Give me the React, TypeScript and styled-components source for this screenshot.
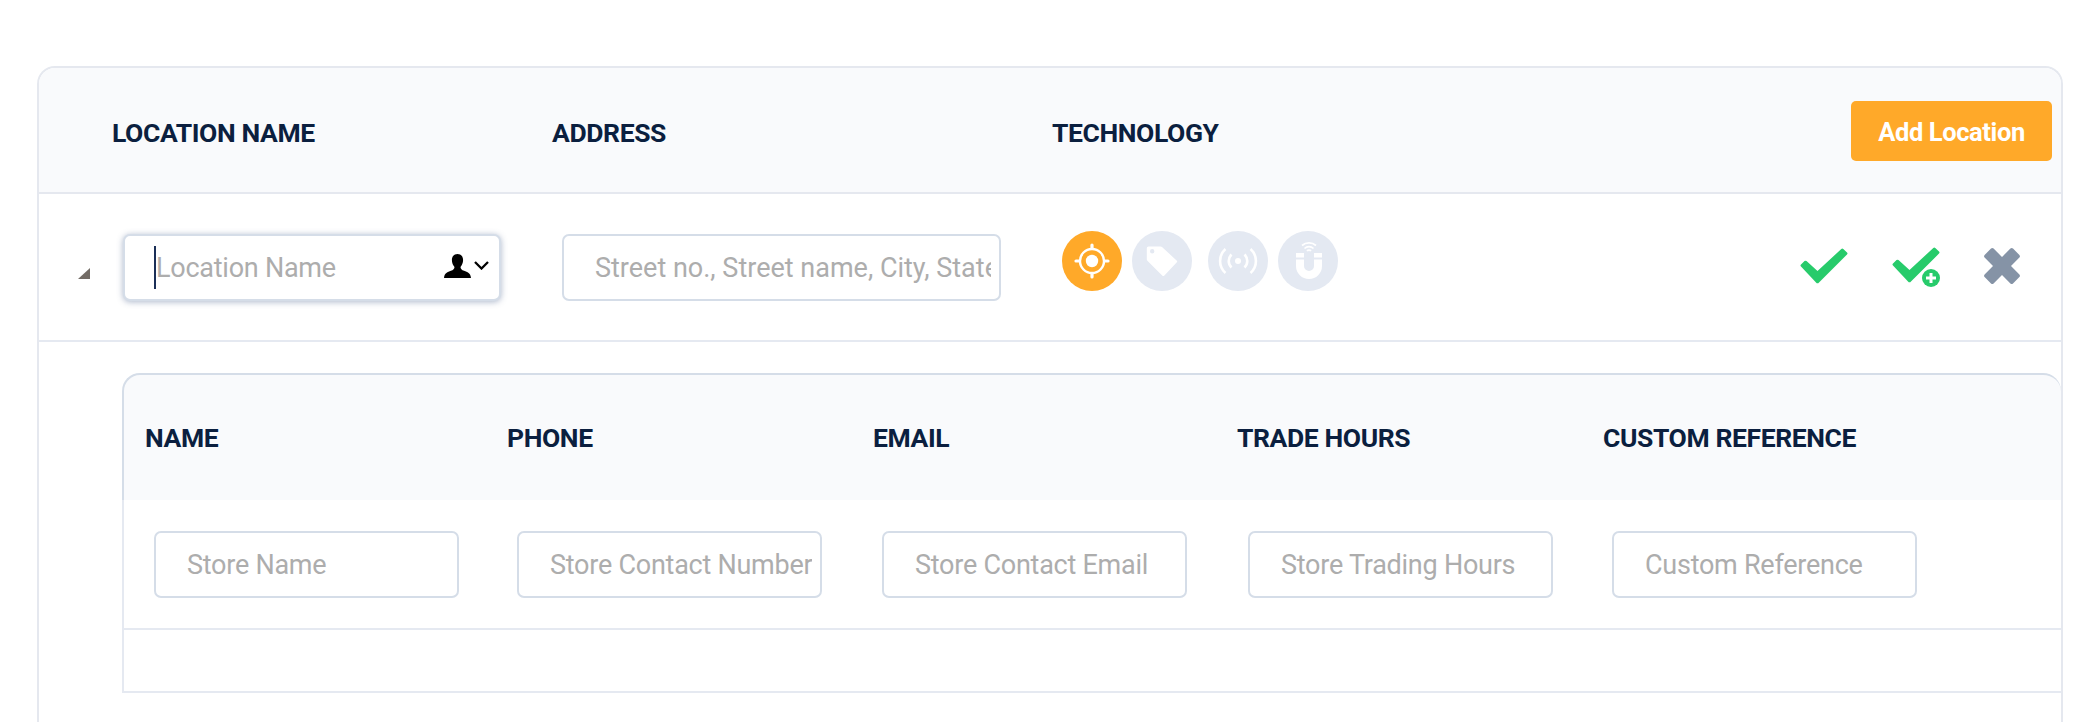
import styled, { createGlobalStyle } from 'styled-components';

const GlobalStyle = createGlobalStyle`
	html, body {
		margin: 0;
		padding: 0;
		background: #fff;
		overflow: hidden;
	}
	#root {
		height: 722px;
		overflow: hidden;
	}
`;

const Page = styled.div`
	padding: 66px 37px 0;
	font-family: Roboto, "Noto Sans", sans-serif;
	box-sizing: border-box;
	height: 722px;
`;

const Card = styled.div`
	width: 2026px;
	height: 700px;
	box-sizing: border-box;
	border: 2px solid #e5e8ef;
	border-bottom: 0;
	border-radius: 18px 18px 0 0;
	background: #fff;
`;

const HeaderRow = styled.div`
	display: flex;
	align-items: center;
	height: 124px;
	padding: 0 9px 0 73px;
	background: #f9fafc;
	border-radius: 16px 16px 0 0;
	border-bottom: 2px solid #e5e8ef;
`;

const HeaderCell = styled.div<{ $width?: number; $drop?: number }>`
	width: ${({ $width }) => ($width ? `${$width}px` : 'auto')};
	padding-top: ${({ $drop }) => $drop ?? 0}px;
	font-size: 26.5px;
	font-weight: 700;
	letter-spacing: -0.4px;
	color: #0b1f3f;
	white-space: nowrap;
`;

const AddButton = styled.button`
	margin: 2px 0 0 auto;
	width: 201px;
	height: 60px;
	padding: 2px 0 0;
	border: 0;
	border-radius: 5px;
	background: #ffa929;
	color: #fff;
	font-family: inherit;
	font-size: 25.5px;
	font-weight: 700;
	letter-spacing: -0.4px;
`;

const LocationRow = styled.div`
	display: flex;
	align-items: center;
	height: 146px;
	padding: 0 41px 0 39px;
	border-bottom: 2px solid #e5e9f1;
`;

const Triangle = styled.div`
	width: 0;
	height: 0;
	margin: 12px 33px 0 0;
	border-style: solid;
	border-width: 0 0 11px 12px;
	border-color: transparent transparent #736c66 transparent;
`;

const FieldWrap = styled.div<{ $gap?: number }>`
	position: relative;
	flex: none;
	display: flex;
	margin-left: ${({ $gap }) => $gap ?? 0}px;
`;

const Field = styled.input<{ $width: number; $focused?: boolean; $tracking?: number }>`
	box-sizing: border-box;
	width: ${({ $width }) => $width}px;
	height: 67px;
	padding: 2px ${({ $focused }) => ($focused ? 60 : 8)}px 0 31px;
	border: 2px solid #d5dde8;
	border-radius: 7px;
	background: #fff;
	font-family: Roboto, "Noto Sans", sans-serif;
	font-size: 27px;
	font-weight: 400;
	letter-spacing: ${({ $tracking }) => $tracking ?? -0.25}px;
	color: #0b1f3f;
	outline: none;
	box-shadow: ${({ $focused }) => ($focused ? '0 1px 6px rgba(70, 95, 140, 0.45)' : 'none')};

	&::placeholder {
		color: #adadad;
		opacity: 1;
	}
`;

const Caret = styled.span`
	position: absolute;
	left: 31px;
	top: 12px;
	width: 2px;
	height: 43px;
	background: #1b2f57;
`;

const PersonMenu = styled.span`
	position: absolute;
	right: 12px;
	top: 20px;
	display: flex;
	align-items: center;
	gap: 3px;
`;

const TechGroup = styled.div`
	display: flex;
	margin: 0 0 12px 61px;
`;

const TechCircle = styled.div<{ $active?: boolean; $gap?: number }>`
	width: 60px;
	height: 60px;
	margin-right: ${({ $gap }) => $gap ?? 0}px;
	border-radius: 50%;
	background: ${({ $active }) => ($active ? '#ffa929' : '#e4e9f2')};

	svg {
		display: block;
	}
`;

const Actions = styled.div`
	margin: 0 0 2px auto;
	display: flex;
	align-items: center;
	gap: 44px;
`;

const ContactsPanel = styled.div`
	margin: 31px 0 0 83px;
`;

const ContactsHeader = styled.div`
	display: grid;
	grid-template-columns: 362px 366px 364px 366px auto;
	align-items: center;
	height: 125px;
	padding: 0 0 0 21px;
	background: #f9fafc;
	border: 2px solid #d5dde8;
	border-bottom: 0;
	border-right: 0;
	border-radius: 18px 18px 0 0;
`;

const ContactsBody = styled.div`
	border-left: 2px solid #e5e9f1;
	border-bottom: 2px solid #e5e9f1;
`;

const ContactsFields = styled.div`
	display: grid;
	grid-template-columns: 363px 365px 366px 364px auto;
	align-items: center;
	height: 128px;
	padding-left: 30px;
	border-bottom: 2px solid #e5e9f1;
`;

const ContactsSpacer = styled.div`
	height: 61px;
`;

const contactColumns = [
	{ title: 'NAME', placeholder: 'Store Name' },
	{ title: 'PHONE', placeholder: 'Store Contact Number' },
	{ title: 'EMAIL', placeholder: 'Store Contact Email' },
	{ title: 'TRADE HOURS', placeholder: 'Store Trading Hours' },
	{ title: 'CUSTOM REFERENCE', placeholder: 'Custom Reference' },
];

const TargetIcon = () => (
	<svg width="60" height="60" viewBox="0 0 60 60" fill="none">
		<circle cx="30" cy="30" r="12" stroke="#fff" strokeWidth="2.4" />
		<circle cx="30" cy="30" r="6.2" fill="#fff" />
		<path d="M30 14v3M30 43v3M14 30h3M43 30h3" stroke="#fff" strokeWidth="3.2" strokeLinecap="round" />
	</svg>
);

const TagIcon = () => (
	<svg width="60" height="60" viewBox="0 0 60 60">
		<path
			fillRule="evenodd"
			fill="#fff"
			d="M16.5 15.5h12a2 2 0 0 1 1.500.6l14.600 13.300a1.500 1.500 0 0 1 0 2.200L32.400 44.400a1.500 1.500 0 0 1-2.200 0L15.400 29.700a2 2 0 0 1-.6-1.500V17.200a1.700 1.700 0 0 1 1.700-1.700zM20.200 18a2.200 2.200 0 1 0 0 4.400 2.200 2.200 0 0 0 0-4.400z"
		/>
	</svg>
);

const SignalIcon = () => (
	<svg width="60" height="60" viewBox="0 0 60 60" fill="none" stroke="#fff" strokeWidth="2.6">
		<circle cx="30" cy="30" r="3" fill="#fff" stroke="none" />
		<path d="M23.500 23.500a9 9 0 0 0 0 13M36.500 23.500a9 9 0 0 1 0 13" />
		<path d="M17.500 18a16 16 0 0 0 0 24M42.500 18a16 16 0 0 1 0 24" />
	</svg>
);

const MagnetIcon = () => (
	<svg width="60" height="60" viewBox="0 0 60 60">
		<path fill="#fff" d="M18 22h8v4.500h-8zM36 22h8v4.500h-8z" />
		<path fill="#fff" d="M18 28.500h8v6.500a5 5 0 0 0 10 0v-6.500h8V35a13 13 0 0 1-26 0z" />
		<path
			fill="none"
			stroke="#fff"
			strokeWidth="1.7"
			d="M24 14.500a10.500 10.500 0 0 1 14 0M26.500 17.500a6.500 6.500 0 0 1 9 0M29 20a2.600 2.600 0 0 1 4 0"
		/>
	</svg>
);

const PersonIcon = () => (
	<svg width="27" height="24" viewBox="0 0 27 24">
		<path
			fill="#000"
			d="M13.500 0c3.600 0 5.600 2.600 5.600 6 0 2.800-1.100 5.200-2.600 7 .1 2 1.200 3 3.600 3.800 3.300 1.100 6.400 2.200 6.900 7.200H0c.5-5 3.600-6.100 6.900-7.200 2.400-.8 3.500-1.800 3.600-3.800-1.500-1.800-2.600-4.200-2.600-7 0-3.400 2-6 5.600-6z"
		/>
	</svg>
);

const ChevronIcon = () => (
	<svg width="15" height="9" viewBox="0 0 15 9" fill="none">
		<path d="M1 1l6.500 6.500L14 1" stroke="#000" strokeWidth="2.300" />
	</svg>
);

const CheckIcon = () => (
	<svg width="48" height="36" viewBox="0 0 48 36">
		<path
			fill="#27cb6b"
			d="M1 16.500l3.500-3.400a1.500 1.500 0 0 1 2 0L17.500 23 41.300 1a1.500 1.500 0 0 1 2 0l3.700 3.500a1.500 1.500 0 0 1 0 2.100L19 34.500a2 2 0 0 1-3 0L1 18.500a1.400 1.400 0 0 1 0-2z"
		/>
	</svg>
);

const CheckPlusIcon = () => (
	<svg width="48" height="42" viewBox="0 0 48 42">
		<path
			fill="#27cb6b"
			d="M1 18.500l3.500-3.400a1.500 1.500 0 0 1 2 0L17.500 25 41.300 3a1.500 1.500 0 0 1 2 0l3.700 3.500a1.500 1.500 0 0 1 0 2.100L19 36.500a2 2 0 0 1-3 0L1 20.500a1.400 1.400 0 0 1 0-2z"
		/>
		<circle cx="39" cy="33" r="9" fill="#27cb6b" />
		<path d="M39 28v10M34 33h10" stroke="#fff" strokeWidth="3" />
	</svg>
);

const CrossIcon = () => (
	<svg width="36" height="36" viewBox="0 0 36 36">
		<path
			fill="#8593a6"
			d="M7 .6a2 2 0 0 1 2.600 0L18 9l8.400-8.400a2 2 0 0 1 2.600 0l6.400 6.400a2 2 0 0 1 0 2.600L27 18l8.400 8.400a2 2 0 0 1 0 2.600L29 35.400a2 2 0 0 1-2.600 0L18 27l-8.400 8.400a2 2 0 0 1-2.600 0L.6 29a2 2 0 0 1 0-2.600L9 18 .6 9.600a2 2 0 0 1 0-2.600z"
		/>
	</svg>
);

export default function App() {
	return (
		<>
			<GlobalStyle />
			<Page>
				<Card>
					<HeaderRow>
						<HeaderCell $width={440} $drop={5}>LOCATION NAME</HeaderCell>
						<HeaderCell $width={500} $drop={5}>ADDRESS</HeaderCell>
						<HeaderCell $drop={5}>TECHNOLOGY</HeaderCell>
						<AddButton>Add Location</AddButton>
					</HeaderRow>
					<LocationRow>
						<Triangle />
						<FieldWrap>
							<Field $width={378} $focused placeholder="Location Name" />
							<Caret />
							<PersonMenu>
								<PersonIcon />
								<ChevronIcon />
							</PersonMenu>
						</FieldWrap>
						<FieldWrap $gap={61}>
							<Field $width={439} $tracking={0} placeholder="Street no., Street name, City, State" />
						</FieldWrap>
						<TechGroup>
							<TechCircle $active $gap={10}>
								<TargetIcon />
							</TechCircle>
							<TechCircle $gap={16}>
								<TagIcon />
							</TechCircle>
							<TechCircle $gap={10}>
								<SignalIcon />
							</TechCircle>
							<TechCircle>
								<MagnetIcon />
							</TechCircle>
						</TechGroup>
						<Actions>
							<CheckIcon />
							<CheckPlusIcon />
							<CrossIcon />
						</Actions>
					</LocationRow>
					<ContactsPanel>
						<ContactsHeader>
							{contactColumns.map((column) => (
								<HeaderCell key={column.title}>{column.title}</HeaderCell>
							))}
						</ContactsHeader>
						<ContactsBody>
							<ContactsFields>
								{contactColumns.map((column) => (
									<Field key={column.title} $width={305} placeholder={column.placeholder} />
								))}
							</ContactsFields>
							<ContactsSpacer />
						</ContactsBody>
					</ContactsPanel>
				</Card>
			</Page>
		</>
	);
}
